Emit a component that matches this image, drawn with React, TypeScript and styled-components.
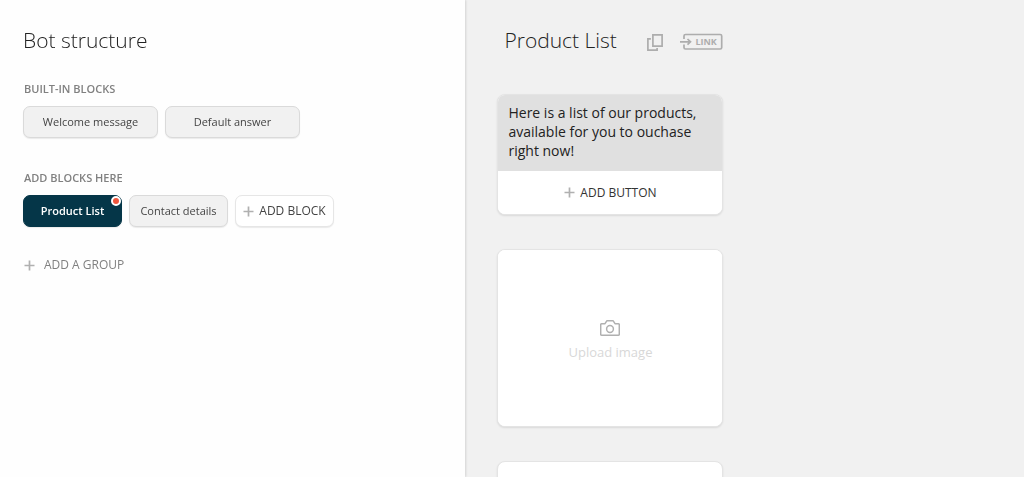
import React from "react";
import styled, { createGlobalStyle, css } from "styled-components";

const GlobalStyle = createGlobalStyle`
  *, *::before, *::after { box-sizing: border-box; }
  body {
    margin: 0;
    background: #f1f1f1;
    font-family: "Open Sans", "Noto Sans", sans-serif;
    color: #333;
  }
  button { font-family: inherit; cursor: pointer; }
`;

const Page = styled.div`
  display: grid;
  grid-template-columns: minmax(350px, 5fr) 6fr;
  height: 100vh;
`;

const Structure = styled.aside`
  padding: 24px 23px;
  background: #fefefe;
  box-shadow: 1px 0 2px rgba(0, 0, 0, 0.12);
  overflow: auto;
  z-index: 1;
`;

const Editor = styled.main`
  padding: 24px 32px;
  background: #f1f1f1;
  overflow-y: auto;
  scrollbar-width: none;
`;

const Title = styled.h1`
  margin: 0;
  font-size: 21px;
  line-height: 32px;
  font-weight: 300;
  color: #222;
`;

const Groups = styled.div`
  display: flex;
  flex-direction: column;
  gap: 32px;
  margin-top: 25px;
`;

const GroupTitle = styled.h2`
  margin: 0 0 9px 1px;
  font-size: 11px;
  line-height: 16px;
  font-weight: 600;
  color: #808080;
`;

const Blocks = styled.div`
  display: flex;
  flex-wrap: wrap;
  gap: 7px;
`;

const Block = styled.button<{ $wide?: boolean; $kind?: "active" | "add" }>`
  position: relative;
  display: flex;
  align-items: center;
  justify-content: center;
  gap: 5px;
  width: ${(p) => (p.$wide ? "135px" : "99px")};
  height: 32px;
  padding: 0;
  border: 1px solid #dadada;
  border-radius: 7px;
  background: #f1f1f1;
  box-shadow: 0 1px 1px rgba(0, 0, 0, 0.08);
  font-size: 11px;
  line-height: 16px;
  color: #444;
  ${(p) =>
    p.$kind === "active" &&
    css`
      border-color: #053648;
      background: #053648;
      color: #fff;
      font-weight: 600;
    `}
  ${(p) =>
    p.$kind === "add" &&
    css`
      border-color: #e6e6e6;
      background: #fff;
      font-size: 12px;
    `}
`;

const Alert = styled.span`
  position: absolute;
  top: 0;
  right: 0;
  width: 10px;
  height: 10px;
  border: 2px solid #fff;
  border-radius: 50%;
  background: #f0563d;
`;

const AddGroup = styled.button`
  display: flex;
  align-items: center;
  gap: 9px;
  margin-top: 28px;
  padding: 0 1px;
  border: 0;
  background: none;
  font-size: 12px;
  line-height: 20px;
  color: #808080;
`;

const EditorHeader = styled.header`
  display: flex;
  align-items: center;
  justify-content: space-between;
  width: 226px;
  margin-bottom: 38px;
  padding-left: 7px;
`;

const Tools = styled.div`
  display: flex;
  align-items: center;
  gap: 17px;
  padding-top: 4px;
`;

const IconButton = styled.button`
  display: flex;
  align-items: center;
  padding: 0;
  border: 0;
  background: none;
  color: #adadad;
`;

const LinkButton = styled(IconButton)`
  position: relative;
  width: 43px;
  height: 18px;
  padding-left: 15px;
  font-size: 9px;
  line-height: 18px;
  font-weight: 700;
`;

const LinkFrame = styled.svg`
  position: absolute;
  inset: 0;
`;

const Card = styled.section`
  width: 226px;
  margin-bottom: 34px;
  border: 1px solid #e4e4e4;
  border-radius: 8px;
  background: #fff;
  box-shadow: 0 1px 2px rgba(0, 0, 0, 0.1);
  overflow: hidden;
`;

const Message = styled.p`
  margin: 0;
  padding: 8px 10px 11px;
  background: #e0e0e0;
  font-size: 14px;
  line-height: 19px;
  color: #222;
`;

const AddButton = styled.button`
  display: flex;
  align-items: center;
  justify-content: center;
  gap: 5px;
  width: 100%;
  height: 43px;
  padding: 0;
  border: 0;
  background: #fff;
  font-size: 12px;
  line-height: 20px;
  color: #333;
`;

const Upload = styled.button`
  display: flex;
  flex-direction: column;
  align-items: center;
  justify-content: center;
  gap: 6px;
  width: 100%;
  height: 176px;
  padding: 5px 0 0;
  border: 0;
  background: #fff;
  font-size: 13px;
  line-height: 20px;
  color: #d8d8d8;
`;

const NextCard = styled(Card)`
  height: 120px;
`;

const Plus = () => (
  <svg width="11" height="11" viewBox="0 0 11 11" fill="none" stroke="#b0b0b0" strokeWidth="1.7" aria-hidden="true">
    <path d="M5.5 0.5v10M0.5 5.5h10" />
  </svg>
);

const CopyIcon = () => (
  <svg width="16" height="17" viewBox="0 0 16 17" fill="none" stroke="currentColor" strokeWidth="1.7" aria-hidden="true">
    <path d="M5.9 0.9h9.2v11.200H5.9z" />
    <path d="M3.9 4.9h-3v11.200h9.200v-2" />
  </svg>
);

const CameraIcon = () => (
  <svg width="20" height="16" viewBox="0 0 20 16" fill="none" stroke="#b0b0b0" strokeWidth="1.5" strokeLinejoin="round" aria-hidden="true">
    <path d="M1.7 3.7H5L6.8 0.8h6.4L15 3.7h3.300q1 0 1 1v9.500q0 1-1 1H1.7q-1 0-1-1V4.700q0-1 1-1z" />
    <circle cx="10" cy="9" r="3.4" />
  </svg>
);

export default function App() {
  return (
    <>
      <GlobalStyle />
      <Page>
        <Structure>
          <Title>Bot structure</Title>
          <Groups>
            <section>
              <GroupTitle>BUILT-IN BLOCKS</GroupTitle>
              <Blocks>
                <Block type="button" $wide>Welcome message</Block>
                <Block type="button" $wide>Default answer</Block>
              </Blocks>
            </section>
            <section>
              <GroupTitle>ADD BLOCKS HERE</GroupTitle>
              <Blocks>
                <Block type="button" $kind="active">
                  Product List
                  <Alert />
                </Block>
                <Block type="button">Contact details</Block>
                <Block type="button" $kind="add">
                  <Plus />
                  ADD BLOCK
                </Block>
              </Blocks>
            </section>
          </Groups>
          <AddGroup type="button">
            <Plus />
            ADD A GROUP
          </AddGroup>
        </Structure>
        <Editor>
          <EditorHeader>
            <Title as="h2">Product List</Title>
            <Tools>
              <IconButton type="button" aria-label="Duplicate block">
                <CopyIcon />
              </IconButton>
              <LinkButton type="button">
                <LinkFrame width="43" height="18" viewBox="0 0 43 18" fill="none" stroke="currentColor" strokeWidth="1.7" aria-hidden="true">
                  <path d="M4 6V3q0-1.500 1.500-1.500h34.700q1.500 0 1.500 1.500v11.500q0 1.500-1.500 1.500H5.500Q4 16 4 14.500v-3" />
                  <path d="M0 8.800h10M7.500 6l3 2.800-3 2.800" />
                </LinkFrame>
                LINK
              </LinkButton>
            </Tools>
          </EditorHeader>
          <Card>
            <Message>Here is a list of our products, available for you to ouchase right now!</Message>
            <AddButton type="button">
              <Plus />
              ADD BUTTON
            </AddButton>
          </Card>
          <Card>
            <Upload type="button">
              <CameraIcon />
              Upload image
            </Upload>
          </Card>
          <NextCard />
        </Editor>
      </Page>
    </>
  );
}
